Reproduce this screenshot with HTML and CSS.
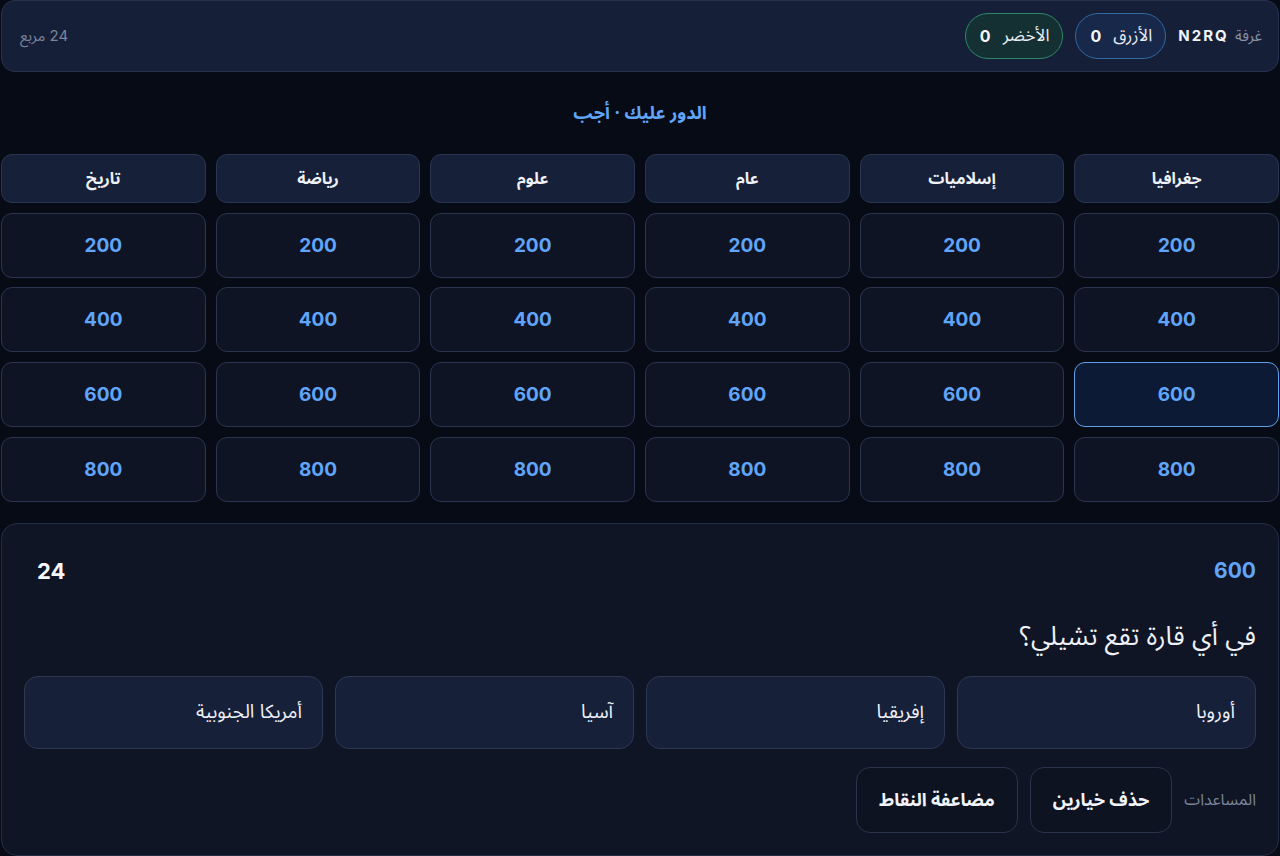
FILE: index.html
```html
<!DOCTYPE html>
<html lang="ar" dir="rtl">
<head>
    <meta charset="UTF-8">
    <meta name="viewport" content="width=device-width, initial-scale=1.0">
    <title>لعبة المربعات</title>
    <link rel="stylesheet" href="styles.css">
</head>
<body>
    <div class="page">
        <header class="topbar">
            <div class="topbar-start">
                <div class="room">غرفة <strong class="room-code">N2RQ</strong></div>
                <div class="team team-blue">
                    <span class="team-name">الأزرق</span>
                    <span class="team-score">0</span>
                </div>
                <div class="team team-green">
                    <span class="team-name">الأخضر</span>
                    <span class="team-score">0</span>
                </div>
            </div>
            <div class="tiles-left">24 مربع</div>
        </header>

        <p class="turn">الدور عليك · أجب</p>

        <div class="board">
            <div class="category">جغرافيا</div>
            <div class="category">إسلاميات</div>
            <div class="category">عام</div>
            <div class="category">علوم</div>
            <div class="category">رياضة</div>
            <div class="category">تاريخ</div>

            <button class="tile">200</button>
            <button class="tile">200</button>
            <button class="tile">200</button>
            <button class="tile">200</button>
            <button class="tile">200</button>
            <button class="tile">200</button>

            <button class="tile">400</button>
            <button class="tile">400</button>
            <button class="tile">400</button>
            <button class="tile">400</button>
            <button class="tile">400</button>
            <button class="tile">400</button>

            <button class="tile tile-active">600</button>
            <button class="tile">600</button>
            <button class="tile">600</button>
            <button class="tile">600</button>
            <button class="tile">600</button>
            <button class="tile">600</button>

            <button class="tile">800</button>
            <button class="tile">800</button>
            <button class="tile">800</button>
            <button class="tile">800</button>
            <button class="tile">800</button>
            <button class="tile">800</button>
        </div>

        <section class="question-card">
            <div class="question-head">
                <span class="question-points">600</span>
                <span class="timer">24</span>
            </div>

            <h2 class="question">في أي قارة تقع تشيلي؟</h2>

            <div class="options">
                <button class="option">أوروبا</button>
                <button class="option">إفريقيا</button>
                <button class="option">آسيا</button>
                <button class="option">أمريكا الجنوبية</button>
            </div>

            <div class="helpers">
                <span class="helpers-label">المساعدات</span>
                <button class="helper">حذف خيارين</button>
                <button class="helper">مضاعفة النقاط</button>
            </div>
        </section>
    </div>
</body>
</html>
```

FILE: styles.css
```css
* {
    margin: 0;
    padding: 0;
    box-sizing: border-box;
}

body {
    font-family: Inter, "Noto Sans Arabic", "Noto Sans", "DejaVu Sans", sans-serif;
    background-color: #070b16;
    color: #e5e9f2;
    min-height: 100vh;
}

button {
    font-family: inherit;
    cursor: pointer;
}

.page {
    padding: 0 1px;
}

/* top bar */
.topbar {
    height: 72px;
    display: flex;
    align-items: center;
    justify-content: space-between;
    padding: 0 16px 0 18px;
    background: #161f38;
    border: 1px solid #28324e;
    border-radius: 14px;
}

.topbar-start {
    display: flex;
    align-items: center;
    gap: 12px;
}

.room {
    font-size: 15px;
    color: #8a93a8;
}

.room-code {
    color: #f1f4fa;
    font-weight: 700;
    letter-spacing: 2px;
    margin-right: 2px;
}

.team {
    height: 46px;
    display: flex;
    align-items: center;
    gap: 12px;
    padding: 0 13px 0 14px;
    border-radius: 23px;
    font-size: 17px;
}

.team-blue {
    background: #17284a;
    border: 1px solid #3169a0;
}

.team-green {
    background: #153032;
    border: 1px solid #2e8868;
}

.team-name {
    color: #e8ecf4;
}

.team-score {
    font-weight: 700;
    font-size: 16px;
    color: #f5f7fb;
}

.tiles-left {
    font-size: 15px;
    color: #7b849a;
}

/* turn */
.turn {
    text-align: center;
    color: #60a5fa;
    font-size: 18px;
    font-weight: 700;
    line-height: 28px;
    margin: 27px 0;
}

/* board */
.board {
    display: grid;
    grid-template-columns: repeat(6, 1fr);
    grid-template-rows: 49px repeat(4, 65px);
    column-gap: 10px;
    row-gap: 9.67px;
}

.category {
    display: flex;
    align-items: center;
    justify-content: center;
    background: #172039;
    border: 1px solid #2a3551;
    border-radius: 11px;
    font-size: 16px;
    font-weight: 700;
    color: #eef1f7;
}

.tile {
    background: #0f1424;
    border: 1px solid #2c3550;
    border-radius: 11px;
    color: #60a5fa;
    font-size: 19px;
    font-weight: 700;
}

.tile-active {
    background: #0c1a35;
    border-color: #5f9ee8;
}

/* question */
.question-card {
    margin-top: 21px;
    height: 333px;
    padding: 22px 22px 23px;
    background: #0f1524;
    border: 1px solid #232d46;
    border-radius: 16px;
}

.question-head {
    height: 50px;
    display: flex;
    align-items: center;
    justify-content: space-between;
}

.question-points {
    color: #60a5fa;
    font-size: 21px;
    font-weight: 700;
}

.timer {
    color: #f5f7fb;
    font-size: 22px;
    font-weight: 700;
    padding-left: 13px;
}

.question {
    margin-top: 20px;
    line-height: 40px;
    font-size: 26px;
    font-weight: 400;
    color: #eef1f7;
}

.options {
    margin-top: 20px;
    display: grid;
    grid-template-columns: repeat(4, 1fr);
    gap: 12px;
}

.option {
    height: 73px;
    padding: 0 20px;
    text-align: right;
    background: #162039;
    border: 1px solid #2d3854;
    border-radius: 14px;
    color: #eef1f7;
    font-size: 19px;
}

.helpers {
    margin-top: 18px;
    display: flex;
    align-items: center;
    gap: 12px;
}

.helpers-label {
    color: #7b849a;
    font-size: 16px;
}

.helper {
    height: 66px;
    padding: 0 22px;
    background: #0e1322;
    border: 1px solid #2b344d;
    border-radius: 14px;
    color: #f1f4fa;
    font-size: 18px;
    font-weight: 700;
}
```
